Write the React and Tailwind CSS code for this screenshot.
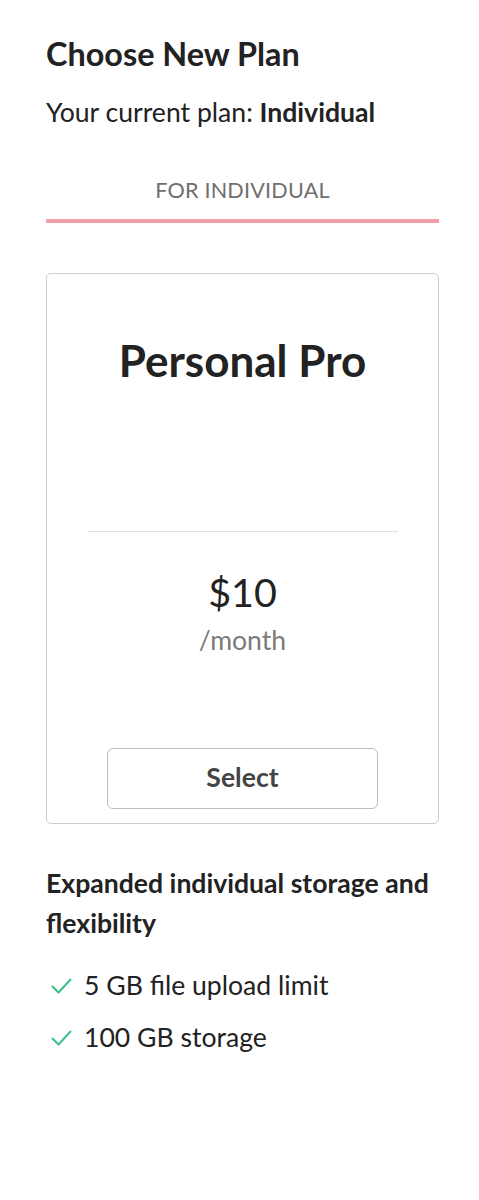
import React from 'react';

function Check() {
  return (
    <svg width="21" height="16" viewBox="0 0 21 16" fill="none" className="shrink-0">
      <path d="M1.5 8.5l6 6L19.5 1.5" stroke="#3dbf8a" strokeWidth="2" strokeLinecap="round" strokeLinejoin="round" />
    </svg>
  );
}

export default function App() {
  const features = ['5 GB file upload limit', '100 GB storage'];

  return (
    <div className="w-[479px] min-h-[1200px] bg-white text-[#222] pl-[46px] pr-[40px] pt-[35px]" style={{ fontFamily: 'Lato, "Open Sans", sans-serif' }}>
      <h1 className="text-[32.4px] leading-[1.2] font-bold">Choose New Plan</h1>
      <p className="mt-[23px] text-[26.6px] leading-[1.2]">
        Your current plan: <span className="font-bold">Individual</span>
      </p>

      <div className="mt-[49px]">
        <div className="text-center text-[21.6px] leading-[1.2] text-[#6f6f6f] tracking-[0.2px] pb-[15px]">FOR INDIVIDUAL</div>
        <div className="h-[4px] bg-[#f0a0ab]" />
      </div>

      <div className="mt-[50px] border border-[#cfcfcf] rounded-[5px] h-[551px] flex flex-col items-center pt-[60px] pb-[14px]">
        <h2 className="text-[44px] leading-[1.2] font-bold">Personal Pro</h2>
        <div className="self-stretch mx-[40px] mt-[145px] h-px bg-[#e2e2e2]" />
        <div className="mt-[36px] text-[39.5px] leading-[1.2]">$10</div>
        <div className="mt-[9px] text-[26.6px] leading-[1.2] text-[#7a7a7a]">/month</div>
        <button className="mt-auto w-[271px] h-[61px] border border-[#bdbdbd] rounded-[6px] text-[26.6px] font-bold text-[#444]">
          Select
        </button>
      </div>

      <h3 className="mt-[39px] text-[26.6px] leading-[40px] font-bold">Expanded individual storage and flexibility</h3>
      <ul className="mt-[27px] flex flex-col gap-[20px]">
        {features.map((f) => (
          <li key={f} className="flex items-center gap-[12px] text-[26.6px] leading-[1.2]">
            <span className="pl-[5px] flex"><Check /></span>
            {f}
          </li>
        ))}
      </ul>
    </div>
  );
}
